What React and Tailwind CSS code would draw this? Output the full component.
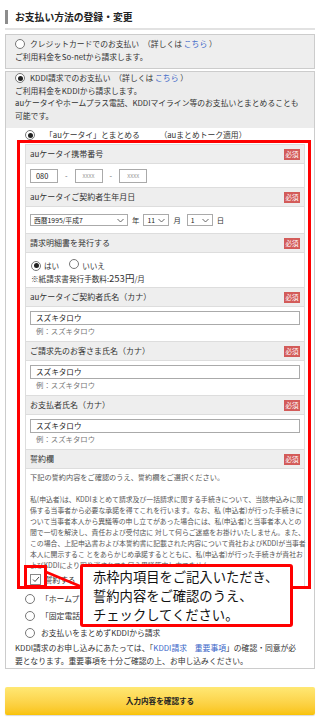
import React from 'react';

const Radio = ({ checked }) => (
  <span className="inline-flex w-[10px] h-[10px] rounded-full border border-[#777] bg-white items-center justify-center shrink-0">
    {checked && <span className="w-[5px] h-[5px] rounded-full bg-[#222]" />}
  </span>
);

const Badge = () => (
  <span className="w-[16px] h-[11px] bg-[#d35b59] text-white text-[6.5px] leading-none flex items-center justify-center">必須</span>
);

const Head = ({ children }) => (
  <div className="h-[19px] bg-[#eeeeee] border-b border-[#dddddd] flex items-center justify-between pl-[4px] pr-[4px] text-[8px] text-[#333]">
    <span>{children}</span>
    <Badge />
  </div>
);

const NameRow = () => (
  <div className="h-[35px] border-b border-[#dddddd] px-[4px] pt-[4px] bg-white">
    <div className="h-[14px] border border-[#aaaaaa] flex items-center pl-[5px] text-[7.6px] text-[#222]">スズキタロウ</div>
    <div className="pl-[6px] text-[#777] text-[7.4px] leading-[12px]">例：スズキタロウ</div>
  </div>
);

const Select = ({ value, w }) => (
  <div className={`${w} h-[12px] border border-[#aaaaaa] bg-white flex items-center justify-between pl-[3px] pr-[3px] text-[6.8px] text-[#222]`}>
    <span>{value}</span>
    <svg width="7" height="5" viewBox="0 0 7 5"><path d="M0.5 1 L3.5 4 L6.5 1" fill="none" stroke="#555" strokeWidth="0.9" /></svg>
  </div>
);

export default function App() {
  return (
    <div className="relative w-[320px] h-[723px] bg-white text-[#333] overflow-hidden" style={{ fontFamily: '"Noto Sans CJK JP", "Noto Sans", sans-serif' }}>
      {/* title */}
      <div className="mx-[5px] pt-[10px] pb-[4px] border-b-2 border-[#e2e2e2] flex items-center">
        <span className="w-[3px] h-[14px] bg-[#8c8c8c] mr-[7px]" />
        <span className="text-[9.8px] font-bold text-[#222] leading-[14px]">お支払い方法の登録・変更</span>
      </div>

      {/* credit card */}
      <div className="mx-[5px] mt-[4px] h-[35px] border border-[#cccccc] bg-[#eeeeee] px-[9px] pt-[2px] text-[7.8px] leading-[13px]">
        <div className="flex items-center gap-[5px]">
          <Radio />
          <span>クレジットカードでのお支払い　（詳しくは <span className="text-[#3a66c8]">こちら</span> ）</span>
        </div>
        <div>ご利用料金をSo-netから請求します。</div>
      </div>

      {/* KDDI */}
      <div className="mx-[5px] mt-[2px] border border-[#cccccc] text-[7.8px]">
        <div className="bg-[#ececec] px-[9px] pb-[6px] leading-[12.5px]">
          <div className="flex items-center gap-[5px]">
            <Radio checked />
            <span>KDDI請求でのお支払い　（詳しくは <span className="text-[#3a66c8]">こちら</span> ）</span>
          </div>
          <div>ご利用料金をKDDIから請求します。</div>
          <div>auケータイやホームプラス電話、KDDIマイライン等のお支払いとまとめることも</div>
          <div>可能です。</div>
        </div>

        <div className="bg-white pl-[11px] pr-[3px] pt-[2px]">
          <div className="h-[10px] flex items-center gap-[10px] pl-[8px] leading-[10px]">
            <Radio checked />
            <span>「auケータイ」とまとめる　　　（auまとめトーク適用）</span>
          </div>

          {/* red frame */}
          <div className="border-[3px] border-[#ff0000] pl-[5px] pr-[3px] pt-[1px] pb-0">
            <div className="border-x border-t border-[#dddddd]">
              <Head>auケータイ携帯番号</Head>
              <div className="h-[24px] border-b border-[#dddddd] flex items-center px-[4px] gap-[7px] text-[7.4px]">
                <div className="w-[28px] h-[14px] border border-[#aaaaaa] flex items-center pl-[5px] text-[#222]">080</div>
                <span className="text-[#666]">-</span>
                <div className="w-[28px] h-[14px] border border-[#aaaaaa] flex items-center justify-center text-[#999] text-[6px]">xxxx</div>
                <span className="text-[#666]">-</span>
                <div className="w-[28px] h-[14px] border border-[#aaaaaa] flex items-center justify-center text-[#999] text-[6px]">xxxx</div>
              </div>

              <Head>auケータイご契約者生年月日</Head>
              <div className="h-[27px] border-b border-[#dddddd] flex items-center px-[4px] text-[7.4px]">
                <Select value="西暦1995/平成7" w="w-[98px]" />
                <span className="ml-[4px] mr-[4px]">年</span>
                <Select value="11" w="w-[26px]" />
                <span className="ml-[4px] mr-[6px]">月</span>
                <Select value="1" w="w-[26px]" />
                <span className="ml-[4px]">日</span>
              </div>

              <Head>請求明細書を発行する</Head>
              <div className="h-[35px] border-b border-[#dddddd] px-[5px] pt-[6px] text-[7.6px] leading-[12px]">
                <div className="flex items-center">
                  <Radio checked />
                  <span className="ml-[3px]">はい</span>
                  <span className="ml-[10px]"><Radio /></span>
                  <span className="ml-[3px]">いいえ</span>
                </div>
                <div>※紙請求書発行手数料:<span className="text-[9.5px]">253円</span>/月</div>
              </div>

              <Head>auケータイご契約者氏名（カナ）</Head>
              <NameRow />
              <Head>ご請求先のお客さま氏名（カナ）</Head>
              <NameRow />
              <Head>お支払者氏名（カナ）</Head>
              <NameRow />

              <Head>誓約欄</Head>
              <div className="px-[4px] pt-[3px] text-[6.85px] leading-[11px] text-[#555] whitespace-nowrap">
                <div className="text-[7.2px]">下記の誓約内容をご確認のうえ、誓約欄をご選択ください。</div>
                <div className="h-[11px]" />
                <div>私(申込者)は、KDDIまとめて請求及び一括請求に関する手続きについて、当該申込みに関</div>
                <div>係する当事者から必要な承諾を得てこれを行います。なお、私 (申込者)が行った手続きに</div>
                <div>ついて当事者本人から異議等の申し立てがあった場合には、私(申込者)と当事者本人との</div>
                <div>間で一切を解決し、責任および受付店に 対して何らご迷惑をお掛けいたしません。また、</div>
                <div>この場合、上記申込書および本誓約書に記載された内容について貴社およびKDDIが当事者</div>
                <div>本人に開示するこ とをあらかじめ承諾するとともに、私(申込者)が行った手続きが貴社お</div>
                <div>よびKDDIにより取り消されても何ら異議等申し立てません。</div>
                <div className="flex items-center gap-[4px] h-[14px] mt-[1px] text-[7.6px] text-[#333]">
                  <span className="w-[11px] h-[11px] border border-[#888] bg-white flex items-center justify-center">
                    <svg width="8" height="7" viewBox="0 0 8 7"><path d="M1 3.5 L3 5.5 L7 1" fill="none" stroke="#444" strokeWidth="1" /></svg>
                  </span>
                  <span>誓約する</span>
                </div>
              </div>
            </div>
          </div>

          <div className="pl-[8px] pt-[1px] leading-[17px]">
            <div className="flex items-center gap-[6px]"><Radio /><span>「ホームプラス電話」とまとめる</span></div>
            <div className="flex items-center gap-[6px]"><Radio /><span>「固定電話（KDDI）」とまとめる</span></div>
            <div className="flex items-center gap-[6px]"><Radio /><span>お支払いをまとめずKDDIから請求</span></div>
          </div>
        </div>
        <div className="bg-white px-[9px] leading-[13px] pb-[1px]">
          <div>KDDI請求のお申し込みにあたっては、「<span className="text-[#3a66c8]">KDDI請求　重要事項</span>」の確認・同意が必</div>
          <div>要となります。重要事項を十分ご確認の上、お申し込みください。</div>
        </div>
      </div>

      {/* button */}
      <div className="mx-[5px] mt-[18px] h-[28px] rounded-[2px] bg-gradient-to-b from-[#ffe873] to-[#f9c300] shadow-[0_1px_1px_rgba(0,0,0,0.15)] flex items-center justify-center">
        <span className="text-[7.6px] font-bold text-[#222]">入力内容を確認する</span>
      </div>

      {/* annotation overlays */}
      <div className="absolute left-[24px] top-[565px] w-[23px] h-[23px] border-[3px] border-[#ff0000]" />
      <svg className="absolute left-[44px] top-[566px]" width="40" height="26" viewBox="0 0 40 26">
        <line x1="2" y1="6" x2="38" y2="21" stroke="#ff0000" strokeWidth="2.5" />
      </svg>
      <div className="absolute left-[80px] top-[564px] w-[213px] h-[63px] bg-white border-[3px] border-[#ff0000] rounded-[3px] pl-[10px] text-[13.3px] leading-[19px] text-[#111]">
        <div>赤枠内項目をご記入いただき、</div>
        <div>誓約内容をご確認のうえ、</div>
        <div>チェックしてください。</div>
      </div>
    </div>
  );
}
